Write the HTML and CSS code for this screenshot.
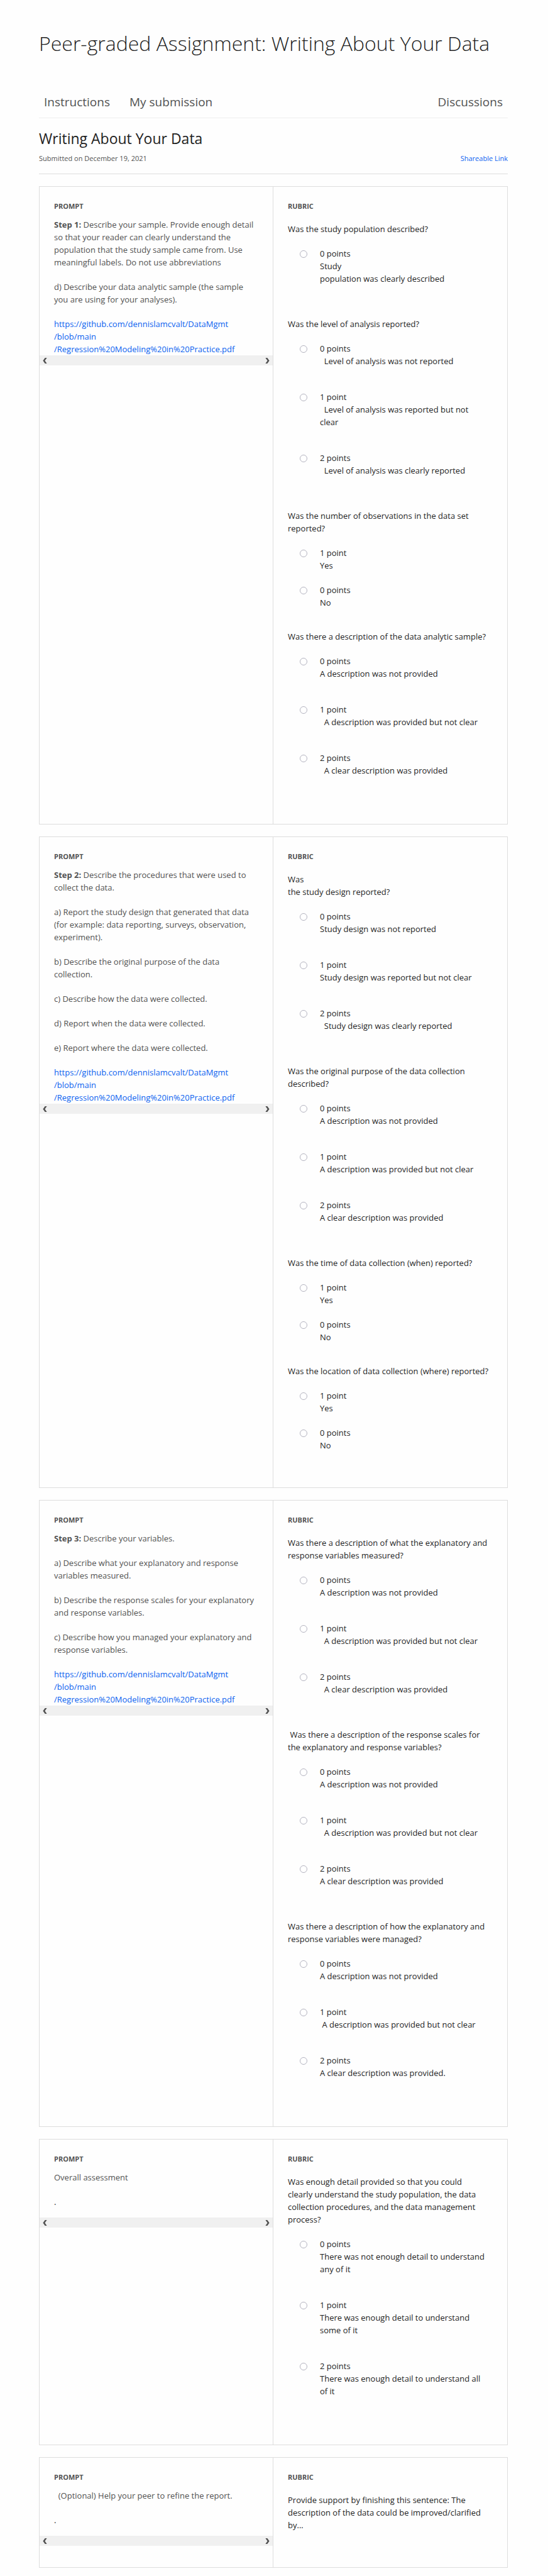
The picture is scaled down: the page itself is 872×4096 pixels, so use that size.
FILE: index.html
```html
<!DOCTYPE html>
<html lang="en">
<head>
<meta charset="utf-8">
<meta name="viewport" content="width=device-width, initial-scale=1">
<title>Peer-graded Assignment: Writing About Your Data</title>
<link rel="stylesheet" href="styles.css">
</head>
<body>
<svg class="sprite" aria-hidden="true">
  <symbol id="chevron-left" viewBox="0 0 7 9"><path d="M3.6 0H6.6L3.4 4.5L6.6 9H3.6L0.4 4.5Z"/></symbol>
  <symbol id="chevron-right" viewBox="0 0 7 9"><path d="M3.4 0H0.4L3.6 4.5L0.4 9H3.4L6.6 4.5Z"/></symbol>
</svg>
<main class="page">
  <h1 class="page-title">Peer-graded Assignment: Writing About Your Data</h1>
  <nav class="tabs" aria-label="Assignment">
    <a class="tab" href="#instructions">Instructions</a>
    <a class="tab" href="#submission">My submission</a>
    <a class="tab tab-end" href="#discussions">Discussions</a>
  </nav>
  <header class="submission-head">
    <h2 class="submission-title">Writing About Your Data</h2>
    <div class="submission-meta">
      <span>Submitted on December 19, 2021</span>
      <a class="link" href="#share">Shareable Link</a>
    </div>
  </header>

  <div class="cards">
    <section class="card">
      <div class="prompt">
        <div class="prompt-body">
          <h3 class="label">PROMPT</h3>
          <div class="prompt-text">
            <p><b>Step 1:</b> Describe your sample. Provide enough detail so that your reader can clearly understand the population that the study sample came from. Use meaningful labels. Do not use abbreviations</p>
            <p>d) Describe your data analytic sample (the sample you are using for your analyses).</p>
            <p><a class="link" href="#pdf">https://github.com/dennislamcvalt/DataMgmt<br>/blob/main<br>/Regression%20Modeling%20in%20Practice.pdf</a></p>
          </div>
        </div>
        <div class="scroller">
          <button type="button" class="scroll-btn" aria-label="Scroll left"><svg><use href="#chevron-left"/></svg></button>
          <button type="button" class="scroll-btn" aria-label="Scroll right"><svg><use href="#chevron-right"/></svg></button>
        </div>
      </div>
      <div class="rubric">
        <h3 class="label">RUBRIC</h3>
        <div class="questions">
          <fieldset class="question rich">
            <legend>Was the study population described?</legend>
            <label class="option"><input type="radio" name="q1"><span>0 points<br>Study<br>population was clearly described</span></label>
          </fieldset>
          <fieldset class="question rich">
            <legend>Was the level of analysis reported?</legend>
            <label class="option"><input type="radio" name="q2"><span>0 points<br>&nbsp;&nbsp;Level of analysis was not reported</span></label>
            <label class="option"><input type="radio" name="q2"><span>1 point<br>&nbsp;&nbsp;Level of analysis was reported but not clear</span></label>
            <label class="option"><input type="radio" name="q2"><span>2 points<br>&nbsp;&nbsp;Level of analysis was clearly reported</span></label>
          </fieldset>
          <fieldset class="question">
            <legend>Was the number of observations in the data set reported?</legend>
            <label class="option"><input type="radio" name="q3"><span>1 point<br>Yes</span></label>
            <label class="option"><input type="radio" name="q3"><span>0 points<br>No</span></label>
          </fieldset>
          <fieldset class="question rich">
            <legend>Was there a description of the data analytic sample?</legend>
            <label class="option"><input type="radio" name="q4"><span>0 points<br>A description was not provided</span></label>
            <label class="option"><input type="radio" name="q4"><span>1 point<br>&nbsp;&nbsp;A description was provided but not clear</span></label>
            <label class="option"><input type="radio" name="q4"><span>2 points<br>&nbsp;&nbsp;A clear description was provided</span></label>
          </fieldset>
        </div>
      </div>
    </section>

    <section class="card">
      <div class="prompt">
        <div class="prompt-body">
          <h3 class="label">PROMPT</h3>
          <div class="prompt-text">
            <p><b>Step 2:</b> Describe the procedures that were used to collect the data.</p>
            <p>a) Report the study design that generated that data (for example: data reporting, surveys, observation, experiment).</p>
            <p>b) Describe the original purpose of the data collection.</p>
            <p>c) Describe how the data were collected.</p>
            <p>d) Report when the data were collected.</p>
            <p>e) Report where the data were collected.</p>
            <p><a class="link" href="#pdf">https://github.com/dennislamcvalt/DataMgmt<br>/blob/main<br>/Regression%20Modeling%20in%20Practice.pdf</a></p>
          </div>
        </div>
        <div class="scroller">
          <button type="button" class="scroll-btn" aria-label="Scroll left"><svg><use href="#chevron-left"/></svg></button>
          <button type="button" class="scroll-btn" aria-label="Scroll right"><svg><use href="#chevron-right"/></svg></button>
        </div>
      </div>
      <div class="rubric">
        <h3 class="label">RUBRIC</h3>
        <div class="questions">
          <fieldset class="question rich">
            <legend>Was<br>the study design reported?</legend>
            <label class="option"><input type="radio" name="q5"><span>0 points<br>Study design was not reported</span></label>
            <label class="option"><input type="radio" name="q5"><span>1 point<br>Study design was reported but not clear</span></label>
            <label class="option"><input type="radio" name="q5"><span>2 points<br>&nbsp;&nbsp;Study design was clearly reported</span></label>
          </fieldset>
          <fieldset class="question rich">
            <legend>Was the original purpose of the data collection described?</legend>
            <label class="option"><input type="radio" name="q6"><span>0 points<br>A description was not provided</span></label>
            <label class="option"><input type="radio" name="q6"><span>1 point<br>A description was provided but not clear</span></label>
            <label class="option"><input type="radio" name="q6"><span>2 points<br>A clear description was provided</span></label>
          </fieldset>
          <fieldset class="question">
            <legend>Was the time of data collection (when) reported?</legend>
            <label class="option"><input type="radio" name="q7"><span>1 point<br>Yes</span></label>
            <label class="option"><input type="radio" name="q7"><span>0 points<br>No</span></label>
          </fieldset>
          <fieldset class="question">
            <legend>Was the location of data collection (where) reported?</legend>
            <label class="option"><input type="radio" name="q8"><span>1 point<br>Yes</span></label>
            <label class="option"><input type="radio" name="q8"><span>0 points<br>No</span></label>
          </fieldset>
        </div>
      </div>
    </section>

    <section class="card">
      <div class="prompt">
        <div class="prompt-body">
          <h3 class="label">PROMPT</h3>
          <div class="prompt-text">
            <p><b>Step 3:</b> Describe your variables.</p>
            <p>a) Describe what your explanatory and response variables measured.</p>
            <p>b) Describe the response scales for your explanatory and response variables.</p>
            <p>c) Describe how you managed your explanatory and response variables.</p>
            <p><a class="link" href="#pdf">https://github.com/dennislamcvalt/DataMgmt<br>/blob/main<br>/Regression%20Modeling%20in%20Practice.pdf</a></p>
          </div>
        </div>
        <div class="scroller">
          <button type="button" class="scroll-btn" aria-label="Scroll left"><svg><use href="#chevron-left"/></svg></button>
          <button type="button" class="scroll-btn" aria-label="Scroll right"><svg><use href="#chevron-right"/></svg></button>
        </div>
      </div>
      <div class="rubric">
        <h3 class="label">RUBRIC</h3>
        <div class="questions">
          <fieldset class="question rich">
            <legend>Was there a description of what the explanatory and response variables measured?</legend>
            <label class="option"><input type="radio" name="q9"><span>0 points<br>A description was not provided</span></label>
            <label class="option"><input type="radio" name="q9"><span>1 point<br>&nbsp;&nbsp;A description was provided but not clear</span></label>
            <label class="option"><input type="radio" name="q9"><span>2 points<br>&nbsp;&nbsp;A clear description was provided</span></label>
          </fieldset>
          <fieldset class="question rich">
            <legend>&nbsp;Was there a description of the response scales for the explanatory and response variables?</legend>
            <label class="option"><input type="radio" name="q10"><span>0 points<br>A description was not provided</span></label>
            <label class="option"><input type="radio" name="q10"><span>1 point<br>&nbsp;&nbsp;A description was provided but not clear</span></label>
            <label class="option"><input type="radio" name="q10"><span>2 points<br>A clear description was provided</span></label>
          </fieldset>
          <fieldset class="question rich">
            <legend>Was there a description of how the explanatory and response variables were managed?</legend>
            <label class="option"><input type="radio" name="q11"><span>0 points<br>A description was not provided</span></label>
            <label class="option"><input type="radio" name="q11"><span>1 point<br>&nbsp;A description was provided but not clear</span></label>
            <label class="option"><input type="radio" name="q11"><span>2 points<br>A clear description was provided.</span></label>
          </fieldset>
        </div>
      </div>
    </section>

    <section class="card">
      <div class="prompt">
        <div class="prompt-body">
          <h3 class="label">PROMPT</h3>
          <div class="prompt-text">
            <p>Overall assessment</p>
            <p class="answer">.</p>
          </div>
        </div>
        <div class="scroller">
          <button type="button" class="scroll-btn" aria-label="Scroll left"><svg><use href="#chevron-left"/></svg></button>
          <button type="button" class="scroll-btn" aria-label="Scroll right"><svg><use href="#chevron-right"/></svg></button>
        </div>
      </div>
      <div class="rubric">
        <h3 class="label">RUBRIC</h3>
        <div class="questions">
          <fieldset class="question rich">
            <legend>Was enough detail provided so that you could<br>clearly understand the study population, the data<br>collection procedures, and the data management process?</legend>
            <label class="option"><input type="radio" name="q12"><span>0 points<br>There was not enough detail to understand any of it</span></label>
            <label class="option"><input type="radio" name="q12"><span>1 point<br>There was enough detail to understand some of it</span></label>
            <label class="option"><input type="radio" name="q12"><span>2 points<br>There was enough detail to understand all of&nbsp;it</span></label>
          </fieldset>
        </div>
      </div>
    </section>

    <section class="card">
      <div class="prompt">
        <div class="prompt-body">
          <h3 class="label">PROMPT</h3>
          <div class="prompt-text">
            <p>&nbsp;&nbsp;(Optional) Help your peer to refine the report.</p>
            <p class="answer">.</p>
          </div>
        </div>
        <div class="scroller">
          <button type="button" class="scroll-btn" aria-label="Scroll left"><svg><use href="#chevron-left"/></svg></button>
          <button type="button" class="scroll-btn" aria-label="Scroll right"><svg><use href="#chevron-right"/></svg></button>
        </div>
      </div>
      <div class="rubric">
        <h3 class="label">RUBRIC</h3>
        <div class="questions">
          <p class="question">Provide support by finishing this sentence: The description of the data could be improved/clarified by...</p>
        </div>
      </div>
    </section>
  </div>
</main>
</body>
</html>
```
FILE: styles.css
```css
* {
  box-sizing: border-box;
}

body {
  margin: 0;
  background: #fefefe;
  color: #1f1f1f;
  font-family: "Open Sans", "Noto Sans", sans-serif;
  font-size: 13px;
  line-height: 20px;
}

h1, h2, h3, p {
  margin: 0;
}

.sprite {
  display: none;
}

.page {
  padding: 47px 64px 8px 62px;
}

.page-title {
  font-size: 32px;
  line-height: 44px;
  font-weight: 300;
}

.tabs {
  display: flex;
  gap: 31px;
  margin-top: 58px;
  padding: 0 8px 12px;
  border-bottom: 1px solid #eee;
}

.tab {
  color: #525252;
  font-size: 19px;
  line-height: 26px;
  text-decoration: none;
}

.tab-end {
  margin-left: auto;
}

.submission-head {
  padding: 17px 0 16px;
  border-bottom: 1px solid #ddd;
}

.submission-title {
  font-size: 23px;
  line-height: 30px;
  font-weight: 400;
}

.submission-meta {
  display: flex;
  justify-content: space-between;
  margin-top: 9px;
  color: #525252;
  font-size: 11px;
  line-height: 16px;
}

.link {
  color: #0b62f0;
  text-decoration: none;
}

.cards {
  display: grid;
  gap: 19px;
  margin-top: 19px;
}

.card {
  display: grid;
  grid-template-columns: 1fr 1fr;
  border: 1px solid #ddd;
}

.prompt {
  border-right: 1px solid #ddd;
}

.prompt-body {
  padding: 23px 22px 0 23px;
}

.label {
  color: #525252;
  font-size: 11px;
  line-height: 16px;
  font-weight: 700;
}

.prompt-text {
  display: grid;
  gap: 19px;
  margin-top: 11px;
  color: #525252;
}

.answer {
  padding-bottom: 15px;
  color: #1f1f1f;
}

.scroller {
  display: flex;
  justify-content: space-between;
  height: 16px;
  background: #f0f0f0;
}

.scroll-btn {
  display: flex;
  align-items: center;
  padding: 0 5px;
  border: 0;
  background: none;
}

.scroll-btn svg {
  width: 7px;
  height: 9px;
  fill: #505050;
}

.rubric {
  padding: 23px 23px 23px 23px;
}

.questions {
  margin-top: 18px;
}

.question {
  min-width: 0;
  margin: 0 0 34px;
  padding: 0;
  border: 0;
}

.question legend {
  margin-bottom: 19px;
  padding: 0;
}

.option {
  display: flex;
  gap: 20px;
  padding: 0 10px 0 19px;
}

.option + .option {
  margin-top: 19px;
}

.rich .option {
  padding-bottom: 18px;
}

.option input {
  flex: none;
  width: 12px;
  height: 12px;
  margin: 5px 0 0;
  appearance: none;
  border: 1px solid #b4b4c0;
  border-radius: 50%;
  background: #fff;
}
```
